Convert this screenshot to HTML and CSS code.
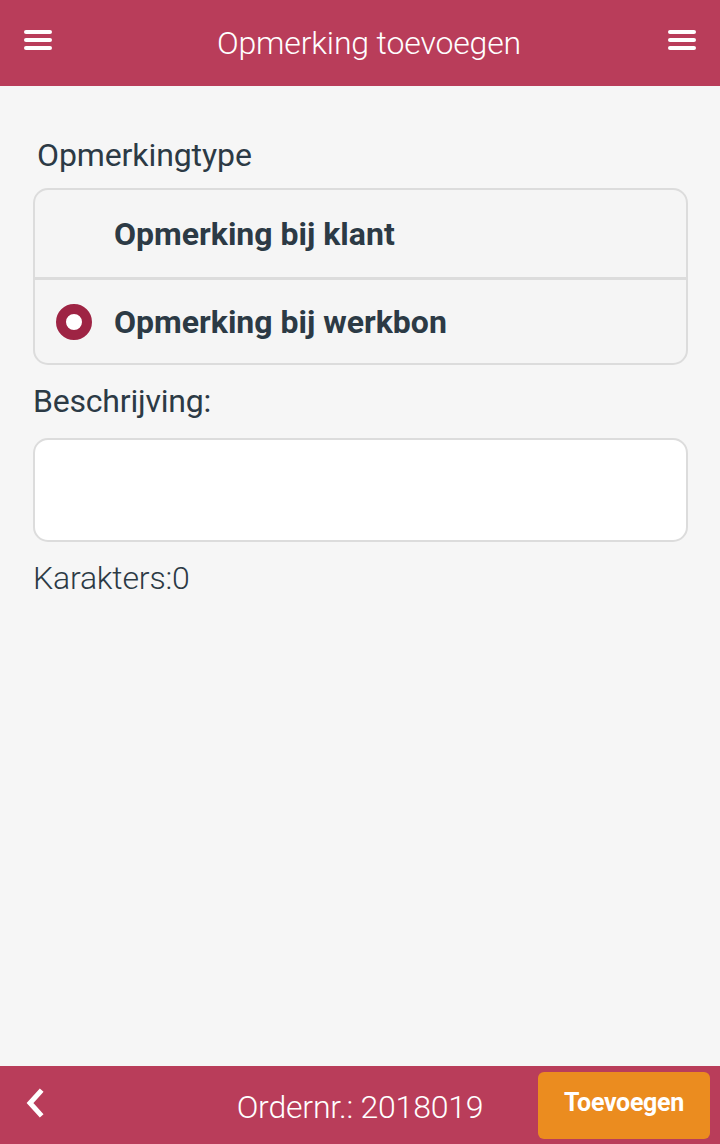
FILE: index.html
```html
<!DOCTYPE html>
<html lang="nl">
<head>
<meta charset="utf-8">
<title>Opmerking toevoegen</title>
<link rel="stylesheet" href="styles.css">
</head>
<body>
<div class="app">
  <header class="topbar">
    <button class="icon-btn" aria-label="Menu">
      <svg width="30" height="22" viewBox="0 0 30 22"><g stroke="#fff" stroke-width="4" stroke-linecap="round"><line x1="3" y1="3" x2="27" y2="3"/><line x1="3" y1="11" x2="27" y2="11"/><line x1="3" y1="19" x2="27" y2="19"/></g></svg>
    </button>
    <h1 class="title">Opmerking toevoegen</h1>
    <button class="icon-btn" aria-label="Menu">
      <svg width="30" height="22" viewBox="0 0 30 22"><g stroke="#fff" stroke-width="4" stroke-linecap="round"><line x1="3" y1="3" x2="27" y2="3"/><line x1="3" y1="11" x2="27" y2="11"/><line x1="3" y1="19" x2="27" y2="19"/></g></svg>
    </button>
  </header>

  <main class="content">
    <div class="field-label type-label">Opmerkingtype</div>
    <div class="choice-group">
      <div class="choice choice-first">
        <span class="radio-slot"></span>
        <span class="choice-text">Opmerking bij klant</span>
      </div>
      <div class="choice choice-second">
        <span class="radio-slot"><span class="radio-on"></span></span>
        <span class="choice-text">Opmerking bij werkbon</span>
      </div>
    </div>

    <div class="field-label desc-label">Beschrijving:</div>
    <textarea class="desc"></textarea>
    <div class="counter">Karakters:0</div>
  </main>

  <footer class="bottombar">
    <button class="back-btn" aria-label="Terug">
      <svg width="22" height="30" viewBox="0 0 22 30"><polyline points="15,4 5,15 15,26" fill="none" stroke="#fff" stroke-width="5" stroke-linecap="square" stroke-linejoin="miter"/></svg>
    </button>
    <div class="order">Ordernr.: 2018019</div>
    <button class="add-btn">Toevoegen</button>
  </footer>
</div>
</body>
</html>
```

FILE: styles.css
```css
* { box-sizing: border-box; }
html, body { margin: 0; padding: 0; }
body {
  font-family: Roboto, "Liberation Sans", sans-serif;
  background: #f6f6f6;
  color: #2c3a45;
}
.app {
  width: 720px;
  height: 1144px;
  display: flex;
  flex-direction: column;
}
.topbar {
  height: 86px;
  background: #b93d5a;
  display: flex;
  align-items: center;
  justify-content: space-between;
  padding: 0 23px 0 23px;
}
.icon-btn {
  background: none;
  border: 0;
  padding: 0;
  width: 30px;
  height: 22px;
  display: flex;
  margin-top: -6px;
}
.title {
  margin: 0;
  padding-left: 18px;
  font-weight: 300;
  font-size: 32px;
  color: #fff;
  letter-spacing: -0.15px;
}
.content {
  flex: 1;
  padding: 0 32px 0 33px;
  display: flex;
  flex-direction: column;
}
.field-label {
  font-size: 32px;
  font-weight: 400;
  color: #2c3a45;
  letter-spacing: -0.2px;
}
.type-label {
  margin-top: 50px;
  padding-left: 4px;
  line-height: 38px;
  letter-spacing: -0.1px;
}
.choice-group {
  margin-top: 14px;
  border: 2px solid #dcdcdc;
  border-radius: 15px;
  overflow: hidden;
  background: #f5f5f5;
}
.choice {
  display: flex;
  align-items: center;
}
.choice-first { height: 87px; }
.choice-second {
  height: 86px;
  border-top: 3px solid #dcdcdc;
}
.radio-slot {
  width: 80px;
  display: flex;
  justify-content: center;
  padding-right: 2px;
}
.radio-on {
  width: 36px;
  height: 36px;
  border-radius: 50%;
  border: 10px solid #9e2444;
  background: #fff;
}
.choice-text {
  font-weight: 700;
  font-size: 32px;
  color: #2c3a45;
  letter-spacing: 0;
  margin-left: -1px;
}
.desc-label {
  margin-top: 17px;
  line-height: 38px;
}
.desc {
  margin-top: 18px;
  height: 104px;
  width: 100%;
  border: 2px solid #dcdcdc;
  border-radius: 15px;
  background: #fff;
  font-family: inherit;
  font-size: 24px;
  padding: 10px;
  resize: none;
  display: block;
}
.counter {
  margin-top: 17px;
  font-size: 32px;
  font-weight: 300;
  color: #2c3a45;
  line-height: 38px;
  letter-spacing: -0.2px;
}
.bottombar {
  height: 78px;
  background: #b93d5a;
  display: grid;
  grid-template-columns: 1fr auto 1fr;
  align-items: center;
  padding: 0 10px 0 25px;
}
.back-btn {
  justify-self: start;
  background: none;
  border: 0;
  padding: 0;
  width: 22px;
  height: 30px;
  display: flex;
  margin-top: -4px;
}
.order {
  text-align: center;
  color: #fff;
  font-size: 32px;
  font-weight: 300;
  letter-spacing: -0.2px;
  margin-top: 4px;
  padding-right: 15px;
}
.add-btn {
  justify-self: end;
  width: 172px;
  height: 67px;
  background: #eb8c1f;
  border: 0;
  border-radius: 6px;
  color: #fff;
  font-family: inherit;
  font-weight: 700;
  font-size: 25px;
  letter-spacing: -0.3px;
  padding-bottom: 6px;
}
```
